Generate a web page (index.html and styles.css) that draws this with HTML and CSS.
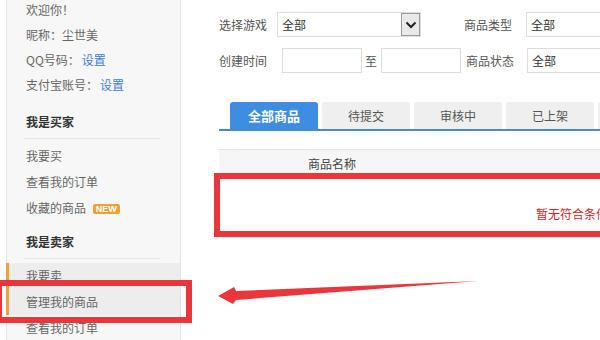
FILE: index.html
```html
<!DOCTYPE html>
<html lang="zh-CN">
<head>
    <meta charset="UTF-8">
    <meta name="viewport" content="width=device-width, initial-scale=1.0">
    <title>管理我的商品</title>
    <link rel="stylesheet" href="styles.css">
</head>
<body>
    <div class="page">
        <div class="sidebar">
            <ul class="info">
                <li>欢迎你！</li>
                <li>昵称：尘世美</li>
                <li>QQ号码：<a href="#">设置</a></li>
                <li>支付宝账号：<a href="#">设置</a></li>
            </ul>
            <h3>我是买家</h3>
            <ul class="menu">
                <li>我要买</li>
                <li>查看我的订单</li>
                <li>收藏的商品 <span class="badge">NEW</span></li>
            </ul>
            <h3>我是卖家</h3>
            <ul class="menu">
                <li class="current">我要卖</li>
                <li class="current">管理我的商品</li>
                <li>查看我的订单</li>
            </ul>
        </div>

        <div class="main">
            <div class="form-row">
                <span class="label w58">选择游戏</span>
                <div class="select w144">全部<span class="arrow"><svg width="12" height="8" viewBox="0 0 12 8"><path d="M1.5 1.5 L6 6 L10.5 1.5" fill="none" stroke="#222" stroke-width="2"/></svg></span></div>
                <span class="label w62 ml43">商品类型</span>
                <div class="select w120">全部</div>
            </div>
            <div class="form-row">
                <span class="label w63">创建时间</span>
                <div class="input"></div>
                <span class="to">至</span>
                <div class="input"></div>
                <span class="label w61 ml5">商品状态</span>
                <div class="select w120">全部</div>
            </div>

            <div class="tabs">
                <div class="tab active">全部商品</div>
                <div class="tab">待提交</div>
                <div class="tab">审核中</div>
                <div class="tab">已上架</div>
                <div class="tab">已下架</div>
            </div>

            <div class="table">
                <div class="table-head">商品名称</div>
                <div class="empty">暂无符合条件的商品</div>
            </div>
        </div>
    </div>

    <div class="mark mark-side"></div>
    <div class="mark mark-table"></div>
    <svg class="mark-arrow" width="600" height="340" viewBox="0 0 600 340">
        <polygon points="218,296 234,287 236,291 478,281 236,300 233,304" fill="#e8363b"/>
    </svg>
</body>
</html>
```

FILE: styles.css
```css
body {
    margin: 0;
    width: 600px;
    height: 340px;
    overflow: hidden;
    position: relative;
    background: #fff;
    font-family: "Noto Sans CJK SC", "Noto Sans", sans-serif;
    font-size: 12px;
    color: #666;
}
ul {
    list-style: none;
    margin: 0;
    padding: 0;
}
a {
    color: #3b80d6;
    text-decoration: none;
    margin-left: 2px;
}
.page {
    display: flex;
    height: 340px;
}
.sidebar {
    flex: none;
    width: 173px;
    margin-left: 6px;
    background: #f7f7f7;
    border-left: 1px solid #e6e6e6;
    border-right: 1px solid #e2e2e2;
}
.info {
    margin-top: -3px;
    padding-bottom: 4px;
}
.info li, .menu li {
    padding-left: 19px;
    line-height: 25px;
}
.menu {
    padding-top: 4px;
}
.menu li {
    line-height: 26px;
}
.menu li.current {
    background: #ededed;
    box-shadow: inset 3px 0 0 #eba23a;
    margin-left: -1px;
    padding-left: 20px;
}
h3 {
    margin: 9px 20px 0 17px;
    padding: 0 0 4px 2px;
    line-height: 24px;
    font-size: 12px;
    font-weight: bold;
    color: #333;
    border-bottom: 1px solid #e8e8e8;
}
.badge {
    display: inline-block;
    margin-left: 4px;
    padding: 0 3px;
    height: 10px;
    line-height: 10px;
    font-size: 9px;
    font-family: "Liberation Sans", Arial, sans-serif;
    font-weight: bold;
    color: #fff;
    background: #eba23a;
    border-radius: 2px;
    vertical-align: 1px;
}

.main {
    flex: none;
    width: 520px;
    padding: 12px 0 0 38px;
}
.form-row {
    display: flex;
    align-items: center;
    height: 25px;
    margin-bottom: 11px;
    white-space: nowrap;
}
.label {
    flex: none;
    color: #555;
    line-height: 25px;
}
.w58 { width: 58px; }
.w61 { width: 61px; }
.w62 { width: 62px; }
.w63 { width: 63px; }
.ml43 { margin-left: 43px; }
.ml5 { margin-left: 5px; }
.select {
    flex: none;
    display: flex;
    align-items: center;
    box-sizing: border-box;
    height: 25px;
    padding-left: 4px;
    border: 1px solid #dcdcdc;
    color: #333;
}
.w144 { width: 144px; }
.w120 { width: 120px; }
.arrow {
    margin-left: auto;
    width: 19px;
    height: 23px;
    box-sizing: border-box;
    border: 1px solid #9a9a9a;
    background: #e9e9e9;
    display: flex;
    align-items: center;
    justify-content: center;
}
.input {
    flex: none;
    box-sizing: border-box;
    width: 80px;
    height: 25px;
    border: 1px solid #dcdcdc;
}
.to {
    flex: none;
    margin: 0 4px 0 3px;
    color: #555;
}

.tabs {
    display: flex;
    margin-top: 29px;
    padding-left: 11px;
    border-bottom: 2px solid #4a89cf;
    white-space: nowrap;
}
.tab {
    flex: none;
    width: 88px;
    height: 27px;
    line-height: 27px;
    margin-right: 4px;
    text-align: center;
    background: #efefef;
    border-radius: 3px 3px 0 0;
    color: #555;
}
.tab.active {
    background: #3d8ee0;
    color: #fff;
    font-weight: bold;
    font-size: 13px;
}

.table {
    margin-top: 18px;
}
.table-head {
    border-top: 1px solid #e2e2e2;
    background: #f6f6f6;
    padding: 3px 0 0 89px;
    line-height: 22px;
    color: #444;
}
.empty {
    padding: 29px 0 0 317px;
    line-height: 20px;
    color: #d4232b;
    white-space: nowrap;
}

.mark {
    position: absolute;
    box-sizing: border-box;
    border: 6px solid #e8363b;
}
.mark-side {
    left: -4px;
    top: 280px;
    width: 196px;
    height: 43px;
}
.mark-table {
    left: 214px;
    top: 173px;
    width: 400px;
    height: 64px;
}
.mark-arrow {
    position: absolute;
    left: 0;
    top: 0;
}
```
